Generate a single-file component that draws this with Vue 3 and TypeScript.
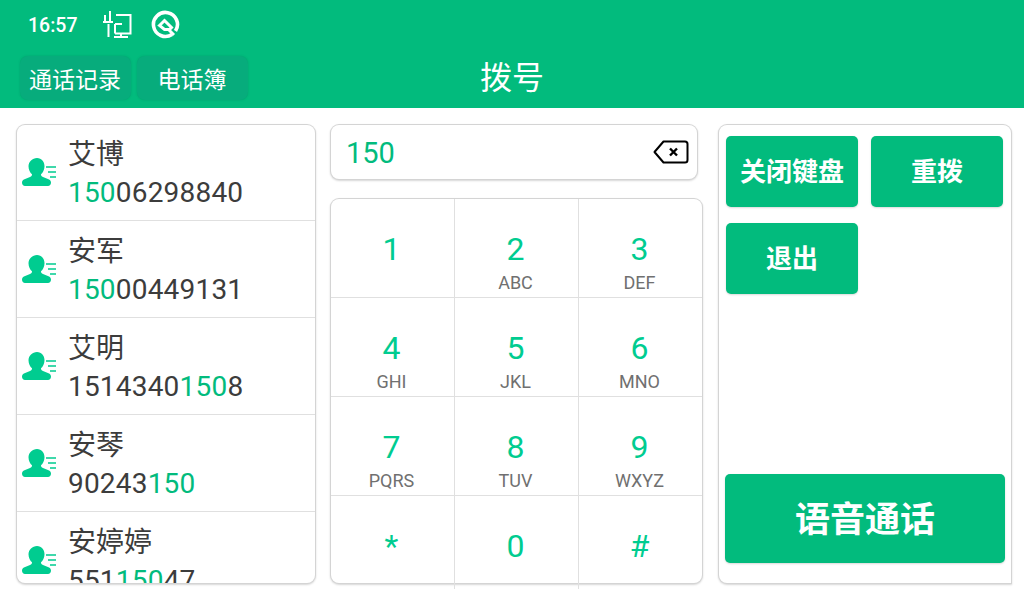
<template>
  <div class="page">
    <header class="top">
      <div class="status">
        <span class="clock">16:57</span>
        <svg class="ic-net" width="30" height="30" viewBox="0 0 30 30" fill="none" stroke="#fff" stroke-width="2">
          <path d="M3 5v7M8 1v11M1 12h10M6.500 14v13" />
          <path d="M14 5h14.500v18.500H13M13 14v9.500M13 14h7M19 23.500v3.500M12 27h14" />
        </svg>
        <svg class="ic-q" width="30" height="30" viewBox="0 0 30 30" fill="none" stroke="#fff">
          <path d="M22 24.500A12 12 0 1 1 25.500 21" stroke-width="3.600" />
          <path d="M9.500 15.500l5-5 7 7-2 2h-5z" stroke-width="3" />
          <path d="M19 20l5 5" stroke-width="3" />
        </svg>
      </div>
      <div class="tabs">
        <button class="tab">通话记录</button>
        <button class="tab">电话簿</button>
        <h1 class="title">拨号</h1>
      </div>
    </header>

    <main class="body">
      <section class="card contacts">
        <div v-for="c in contacts" :key="c.name" class="row">
          <svg class="avatar" width="36" height="30" viewBox="0 0 36 30">
            <path fill="#00cc90" d="M15 0c4.600 0 7.500 3.800 7.500 8.300 0 3.700-1.700 6.500-3.500 8 0 1.500.6 2.200 2 2.700l5.500 2.200c1.500.7 2.500 1.700 2.500 3.300 0 2-1.300 3.500-3 3.500H3c-1.700 0-3-1.500-3-3.500 0-1.600 1-2.600 2.500-3.300L8 19c1.400-.5 2-1.200 2-2.700-1.800-1.500-3.500-4.300-3.500-8C6.500 3.800 10.400 0 15 0z" />
            <path stroke="#00cc90" stroke-width="1.600" d="M24 9h10M26 14h8M28 19h6" />
          </svg>
          <div class="info">
            <div class="name">{{ c.name }}</div>
            <div class="phone">
              <span v-for="(p, i) in parts(c.phone)" :key="i" :class="{ hit: p === query }">{{ p }}</span>
            </div>
          </div>
        </div>
      </section>

      <section class="middle">
        <div class="card input">
          <span class="typed">{{ query }}</span>
          <svg class="del" width="36" height="24" viewBox="0 0 36 24" fill="none">
            <path d="M10.500 1.500H32a2.500 2.500 0 0 1 2.500 2.500v16a2.500 2.500 0 0 1-2.500 2.500H10.500L1.500 12z" stroke="#000" stroke-width="2" stroke-linejoin="round" />
            <path d="M17 8.500l7 7M24 8.500l-7 7" stroke="#000" stroke-width="2.400" />
          </svg>
        </div>
        <div class="card pad">
          <div v-for="k in keys" :key="k.n" class="key">
            <span class="num">{{ k.n }}</span>
            <span class="sub">{{ k.s }}</span>
          </div>
        </div>
      </section>

      <section class="card actions">
        <div class="small-btns">
          <button class="btn">关闭键盘</button>
          <button class="btn">重拨</button>
          <button class="btn">退出</button>
        </div>
        <button class="btn call">语音通话</button>
      </section>
    </main>
  </div>
</template>

<script setup lang="ts">
interface Contact {
  name: string
  phone: string
}
interface Key {
  n: string
  s: string
}

const query = '150'

const contacts: Contact[] = [
  { name: '艾博', phone: '15006298840' },
  { name: '安军', phone: '15000449131' },
  { name: '艾明', phone: '15143401508' },
  { name: '安琴', phone: '90243150' },
  { name: '安婷婷', phone: '55115047' },
]

const keys: Key[] = [
  { n: '1', s: '' },
  { n: '2', s: 'ABC' },
  { n: '3', s: 'DEF' },
  { n: '4', s: 'GHI' },
  { n: '5', s: 'JKL' },
  { n: '6', s: 'MNO' },
  { n: '7', s: 'PQRS' },
  { n: '8', s: 'TUV' },
  { n: '9', s: 'WXYZ' },
  { n: '*', s: '' },
  { n: '0', s: '' },
  { n: '#', s: '' },
]

function parts(phone: string): string[] {
  const at = phone.indexOf(query)
  if (at < 0) return [phone]
  return [phone.slice(0, at), query, phone.slice(at + query.length)].filter(Boolean)
}
</script>

<style>
html,
body {
  margin: 0;
  background: #fff;
  overflow: hidden;
}
</style>

<style scoped>
.page {
  width: 1024px;
  height: 600px;
  overflow: hidden;
  font-family: Roboto, "Noto Sans CJK SC", sans-serif;
  background: #fff;
}

.top {
  height: 108px;
  background: #02bb7d;
  color: #fff;
}

.status {
  height: 50px;
  display: flex;
  align-items: center;
  padding-left: 28px;
}

.clock {
  font-size: 19.5px;
  font-weight: 500;
  width: 74px;
}

.ic-q {
  margin-left: 18px;
}

.tabs {
  position: relative;
  height: 58px;
  display: flex;
  gap: 6px;
  padding: 6px 0 0 20px;
  box-sizing: border-box;
}

.tab {
  width: 111px;
  height: 44px;
  border: 0;
  border-radius: 8px;
  background: #07ac7c;
  color: #fff;
  font: 400 23px Roboto, "Noto Sans CJK SC", sans-serif;
  padding: 0 1px 0 0;
  box-shadow: 0 0 2px rgba(0, 100, 70, 0.3);
}

.title {
  position: absolute;
  left: 0;
  right: 0;
  top: 5px;
  margin: 0;
  text-align: center;
  font-size: 32px;
  line-height: 46px;
  font-weight: 400;
}

.body {
  display: flex;
  padding: 17px 0 0 17px;
  height: 492px;
  box-sizing: border-box;
}

.card {
  background: #fff;
  border-radius: 8px;
  box-shadow: 0 0 0 1px #d4d4d4, 0 1px 2px 1px rgba(0, 0, 0, 0.16);
}

.contacts {
  width: 298px;
  height: 458px;
  overflow: hidden;
  flex: none;
}

.row {
  height: 97px;
  box-sizing: border-box;
  border-bottom: 1px solid #e0e0e0;
  display: flex;
  align-items: flex-start;
  padding-left: 5px;
}

.row:first-child {
  margin-top: -1px;
}

.avatar {
  flex: none;
  margin-top: 34px;
}

.info {
  padding-top: 10px;
  margin-left: 10px;
}

.name {
  font-size: 28px;
  line-height: 41px;
  color: #3c3c3c;
}

.phone {
  font-size: 28px;
  line-height: 36px;
  color: #3c3c3c;
  letter-spacing: 0.2px;
}

.hit {
  color: #02bb7d;
}

.middle {
  width: 371px;
  margin-left: 16px;
  flex: none;
}

.input {
  width: 366px;
  height: 54px;
  display: flex;
  align-items: center;
  justify-content: space-between;
  padding: 0 8px 0 15px;
  box-sizing: border-box;
}

.typed {
  font-size: 29px;
  color: #02bb7d;
  padding-top: 2px;
}

.pad {
  margin-top: 20px;
  height: 384px;
  display: grid;
  grid-template-columns: 124px 124px 123px;
  grid-template-rows: 99px 99px 99px 93px;
}

.key {
  display: flex;
  flex-direction: column;
  align-items: center;
  box-sizing: border-box;
  border-right: 1px solid #e0e0e0;
  border-bottom: 1px solid #e0e0e0;
  padding: 30px 2px 0 0;
}

.key:nth-child(3n) {
  border-right: 0;
}

.key:nth-child(n + 10) {
  border-bottom: 0;
}

.num {
  font-size: 32px;
  line-height: 40px;
  color: #00cc90;
}

.sub {
  font-size: 18px;
  line-height: 20px;
  margin-top: 4px;
  color: #707070;
}

.actions {
  width: 292px;
  height: 458px;
  margin-left: 17px;
  flex: none;
  border-radius: 8px 8px 0 8px;
  padding: 11px 6px 20px 6px;
  box-sizing: border-box;
  display: flex;
  flex-direction: column;
  justify-content: space-between;
}

.small-btns {
  display: grid;
  grid-template-columns: 132px 132px;
  gap: 16px 13px;
  padding-left: 1px;
}

.btn {
  height: 71px;
  border: 0;
  border-radius: 5px;
  background: #02bb7d;
  color: #fff;
  font: 700 26px Roboto, "Noto Sans CJK SC", sans-serif;
  padding: 0 0 4px;
  box-shadow: 0 1px 2px rgba(0, 0, 0, 0.15);
}

.call {
  width: 280px;
  height: 89px;
  font-size: 35px;
}
</style>
